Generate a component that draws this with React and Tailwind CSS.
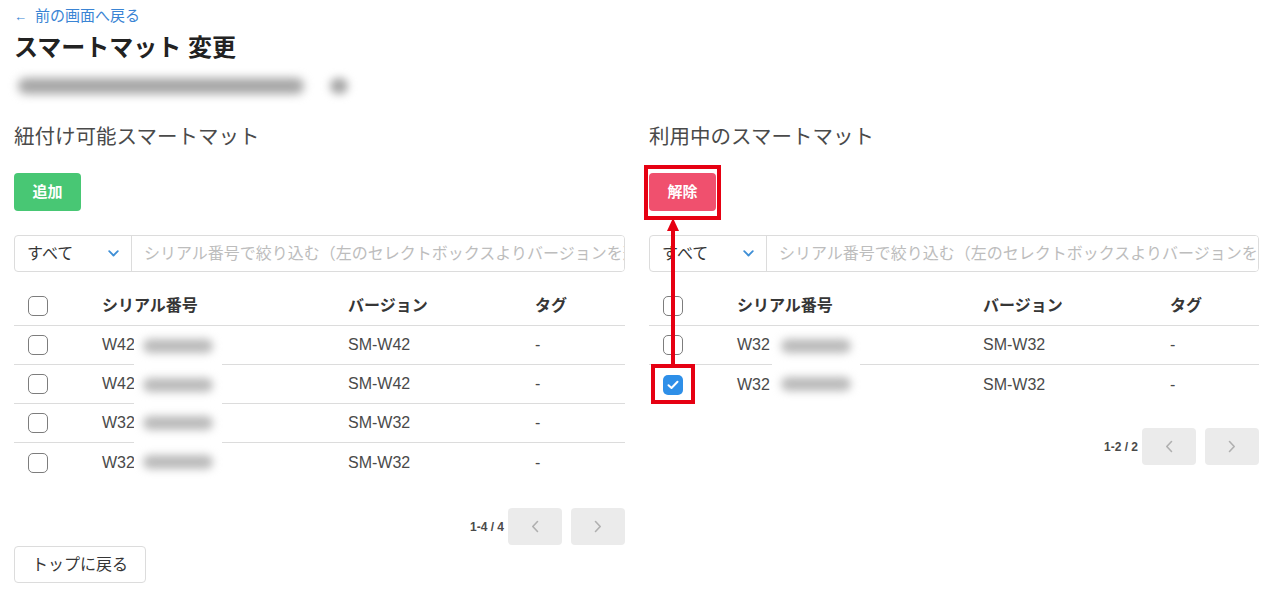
import React from 'react';

const FONT = { fontFamily: '"Liberation Sans", "Noto Sans CJK JP", sans-serif' };

const available = [
  { serial: 'W42', version: 'SM-W42' },
  { serial: 'W42', version: 'SM-W42' },
  { serial: 'W32', version: 'SM-W32' },
  { serial: 'W32', version: 'SM-W32' },
];

const inUse = [
  { serial: 'W32', version: 'SM-W32', checked: false },
  { serial: 'W32', version: 'SM-W32', checked: true },
];

// ── Small pieces ─────────────────────────────────────────────────────────────
function Checkbox({ checked }) {
  if (checked) {
    return (
      <span className="flex h-[20px] w-[20px] items-center justify-center rounded-[5px] bg-[#2e8fe8]">
        <svg width="12" height="10" viewBox="0 0 12 10" fill="none">
          <path d="M1.5 5.2L4.5 8L10.5 1.8" stroke="white" strokeWidth="2" strokeLinecap="round" strokeLinejoin="round" />
        </svg>
      </span>
    );
  }
  return <span className="block h-[20px] w-[20px] rounded-[5px] border-[1.5px] border-[#7d7d7d] bg-white" />;
}

function Chevron({ dir }) {
  return (
    <svg width="8" height="13" viewBox="0 0 8 13" fill="none">
      <path
        d={dir === 'left' ? 'M6.5 1.5L1.8 6.5L6.5 11.5' : 'M1.5 1.5L6.2 6.5L1.5 11.5'}
        stroke="#b0b0b0"
        strokeWidth="1.6"
        strokeLinecap="round"
        strokeLinejoin="round"
      />
    </svg>
  );
}

function Filter() {
  return (
    <div className="flex h-[37px] overflow-hidden rounded-[4px] border border-[#dcdcdc] bg-white">
      <div className="flex w-[117px] shrink-0 items-center justify-between border-r border-[#dcdcdc] pl-[12px] pr-[12px]">
        <span className="text-[16px] text-[#363636]">すべて</span>
        <svg width="11" height="7" viewBox="0 0 11 7" fill="none">
          <path d="M1.2 1.2L5.5 5.5L9.8 1.2" stroke="#3f8fd6" strokeWidth="1.8" strokeLinecap="round" strokeLinejoin="round" />
        </svg>
      </div>
      <input
        className="min-w-0 flex-1 bg-white pl-[12px] pr-0 text-[16px] text-[#363636] outline-none placeholder:text-[#bdbdbd]"
        placeholder="シリアル番号で絞り込む（左のセレクトボックスよりバージョンを選択してください）"
        style={FONT}
      />
    </div>
  );
}

function Table({ rows, redactLeft }) {
  const cols = 'grid grid-cols-[76px_246px_187px_1fr] items-center';
  return (
    <div className="relative mt-[14px]">
      <div className={`${cols} h-[40px] border-b border-[#dcdcdc]`}>
        <div className="pl-[14px]"><Checkbox /></div>
        <div className="pl-[12px] text-[16px] font-bold text-[#363636]">シリアル番号</div>
        <div className="pl-[12px] text-[16px] font-bold text-[#363636]">バージョン</div>
        <div className="pl-[12px] text-[16px] font-bold text-[#363636]">タグ</div>
      </div>
      {rows.map((r, i) => (
        <div
          key={i}
          className={`${cols} h-[39px] ${i < rows.length - 1 ? 'border-b border-[#dcdcdc]' : ''}`}
        >
          <div className="pl-[14px]"><Checkbox checked={r.checked} /></div>
          <div className="pl-[12px] text-[16px] text-[#4a4a4a]">{r.serial}</div>
          <div className="pl-[12px] text-[16px] text-[#4a4a4a]">{r.version}</div>
          <div className="pl-[12px] text-[16px] text-[#4a4a4a]">-</div>
        </div>
      ))}

      {/* redacted part of the serial numbers */}
      <div
        className="absolute top-[41px] flex w-[88px] flex-col bg-white"
        style={{ left: redactLeft, height: rows.length * 39 - 2 }}
      >
        {rows.map((_, i) => (
          <div key={i} className="flex h-[39px] items-center justify-center">
            <span className="block h-[14px] w-[70px] rounded-full bg-[#bababa] blur-[4px]" />
          </div>
        ))}
      </div>
    </div>
  );
}

function Pagination({ label, mt }) {
  return (
    <div className={`flex items-center justify-end ${mt}`}>
      <span className="mr-[4px] text-[12px] font-bold text-[#4a4a4a]">{label}</span>
      <div className="flex h-[37px] w-[54px] items-center justify-center rounded-[4px] bg-[#ebebeb]">
        <Chevron dir="left" />
      </div>
      <div className="ml-[9px] flex h-[37px] w-[54px] items-center justify-center rounded-[4px] bg-[#ebebeb]">
        <Chevron dir="right" />
      </div>
    </div>
  );
}

// ── Page ─────────────────────────────────────────────────────────────────────
export default function App() {
  return (
    <div className="relative min-h-screen w-[1269px] bg-white pl-[14px] pr-[10px] pt-[6px]" style={FONT}>
      {/* Back link */}
      <div className="flex h-[20px] items-center text-[#3a84d4]">
        <span className="text-[13px] font-bold leading-none">←</span>
        <span className="ml-[8px] text-[15px]">前の画面へ戻る</span>
      </div>

      <h1 className="mt-[6px] h-[32px] text-[24px] font-bold leading-[32px] text-[#222]">スマートマット 変更</h1>

      {/* blurred store name */}
      <div className="mt-[10px] flex h-[24px] items-center">
        <span className="ml-[4px] block h-[16px] w-[286px] rounded-full bg-[#a6a6a6] blur-[5px]" />
        <span className="ml-[26px] block h-[16px] w-[18px] rounded-full bg-[#a6a6a6] blur-[4px]" />
      </div>

      <div className="mt-[25px] grid grid-cols-[611px_610px] gap-x-[24px]">
        {/* Left column */}
        <section>
          <h2 className="h-[28px] text-[20.5px] leading-[28px] text-[#4a4a4a]">紐付け可能スマートマット</h2>
          <button className="mt-[22px] flex h-[38px] w-[67px] items-center justify-center rounded-[4px] bg-[#48c774] text-[15px] font-bold text-white">
            追加
          </button>
          <div className="mt-[24px]"><Filter /></div>
          <Table rows={available} redactLeft={120} />
          <Pagination label="1-4 / 4" mt="mt-[26px]" />
        </section>

        {/* Right column */}
        <section>
          <h2 className="h-[28px] text-[20.5px] leading-[28px] text-[#4a4a4a]">利用中のスマートマット</h2>
          <button className="mt-[22px] flex h-[38px] w-[67px] items-center justify-center rounded-[4px] bg-[#f0506e] text-[15px] font-bold text-white">
            解除
          </button>
          <div className="mt-[24px]"><Filter /></div>
          <Table rows={inUse} redactLeft={123} />
          <Pagination label="1-2 / 2" mt="mt-[24px]" />
        </section>
      </div>

      <button className="mt-px flex h-[37px] w-[132px] items-center justify-center rounded-[4px] border border-[#dcdcdc] bg-white text-[16px] text-[#363636]">
        トップに戻る
      </button>

      {/* Annotation overlay */}
      <div className="absolute left-[644px] top-[165px] h-[55px] w-[77px] border-[4px] border-[#e60012]" />
      <div className="absolute left-[651px] top-[364px] h-[40px] w-[44px] border-[4px] border-[#e60012]" />
      <svg className="absolute left-[665px] top-[218px]" width="16" height="148" viewBox="0 0 16 148">
        <rect x="6" y="10" width="4" height="138" fill="#e60012" />
        <path d="M8 0L14 13H2Z" fill="#e60012" />
      </svg>
    </div>
  );
}
